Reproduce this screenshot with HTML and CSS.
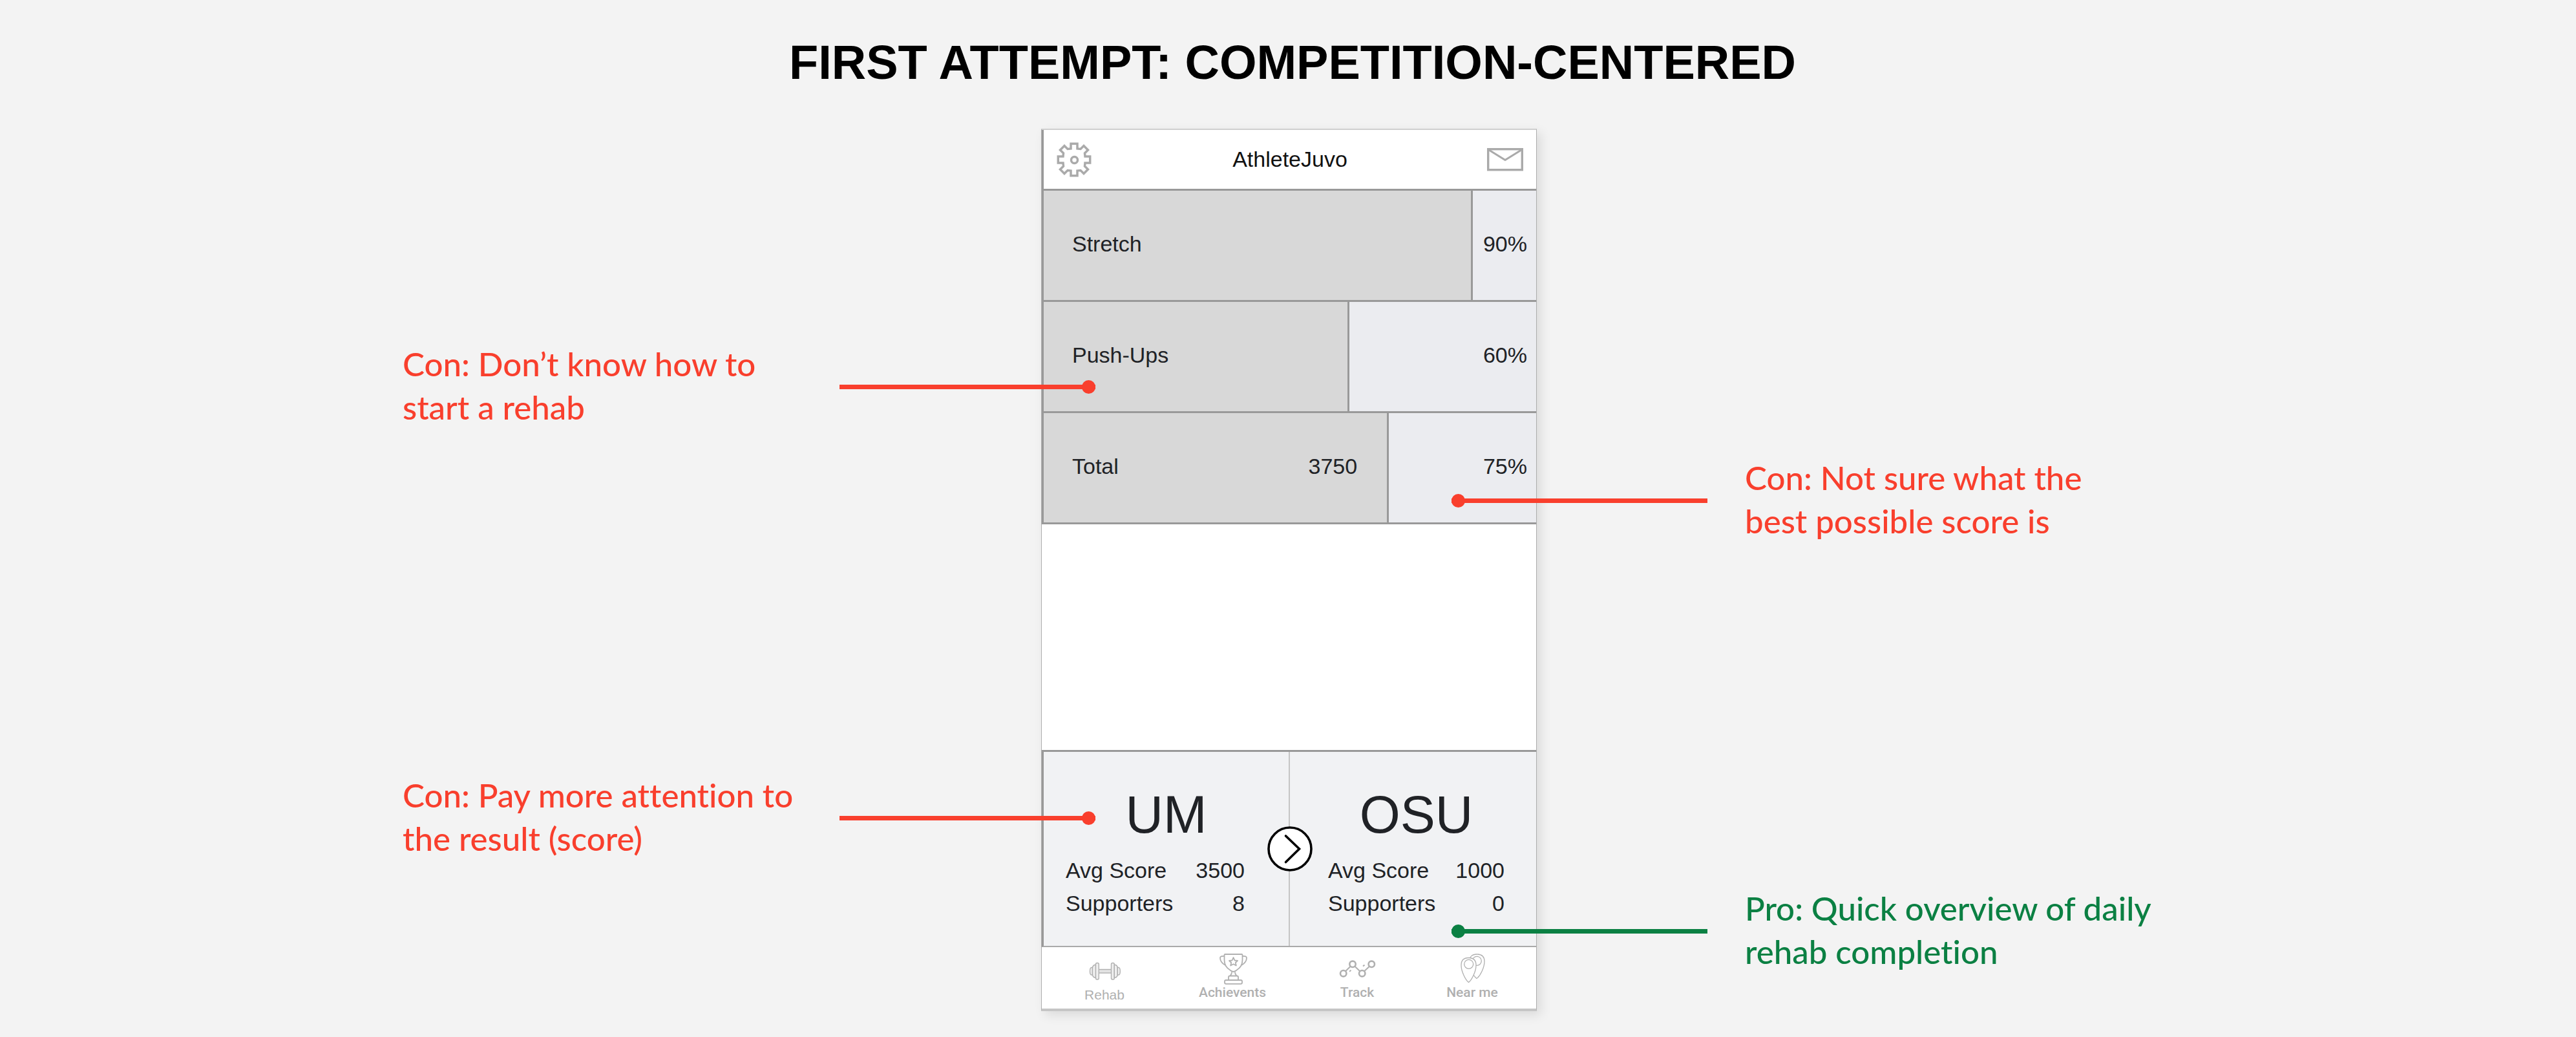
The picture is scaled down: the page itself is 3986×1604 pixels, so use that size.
FILE: index.html
```html
<!DOCTYPE html>
<html lang="en">
<head>
<meta charset="utf-8">
<meta name="viewport" content="width=device-width, initial-scale=1">
<title>First attempt: competition-centered</title>
<link rel="stylesheet" href="styles.css">
</head>
<body>
<main class="slide">
  <h1 class="slide-title">FIRST ATTEMPT: COMPETITION-CENTERED</h1>

  <div class="stage">
    <div class="notes notes-left">
      <div class="note con">
        <p class="note-text">Con: Don’t know how to<br>start a rehab</p>
        <span class="leader"></span>
      </div>
      <div class="note con">
        <p class="note-text">Con: Pay more attention to<br>the result (score)</p>
        <span class="leader"></span>
      </div>
    </div>

    <section class="phone" aria-label="AthleteJuvo app">
      <header class="app-bar">
        <button class="icon-button" type="button" aria-label="Settings">
          <svg width="54" height="54" viewBox="-27 -27 54 54" fill="none" stroke="currentColor" stroke-width="3.5">
            <path d="M-5 -24.7H5V-17L10 -16.5 15 -21.5 21.5 -15 16.5 -10 17 -5H24.7V5H17L16.5 10 21.5 15 15 21.5 10 16.5 5 17V24.7H-5V17L-10 16.5 -15 21.5 -21.5 15 -16.5 10 -17 5H-24.7V-5H-17L-16.5 -10 -21.5 -15 -15 -21.5 -10 -16.5 -5 -17Z"/>
            <circle cx=".5" cy=".5" r="5"/>
          </svg>
        </button>
        <h2 class="app-name">AthleteJuvo</h2>
        <button class="icon-button icon-end" type="button" aria-label="Messages">
          <svg width="56" height="36" viewBox="0 0 56 36" fill="none" stroke="currentColor" stroke-width="3.4">
            <rect x="1.7" y="1.7" width="52.6" height="32"/>
            <path d="M3 3L28 18.5 53 3" stroke-width="3"/>
          </svg>
        </button>
      </header>

      <ul class="tasks">
        <li class="task">
          <div class="task-fill" style="width:87.1%"><span>Stretch</span></div>
          <span class="task-percent">90%</span>
        </li>
        <li class="task">
          <div class="task-fill" style="width:62.1%"><span>Push-Ups</span></div>
          <span class="task-percent">60%</span>
        </li>
        <li class="task">
          <div class="task-fill" style="width:70.1%"><span>Total</span><span>3750</span></div>
          <span class="task-percent">75%</span>
        </li>
      </ul>

      <div class="versus">
        <div class="team team-home">
          <h3 class="team-name">UM</h3>
          <dl class="stats">
            <div class="stat"><dt>Avg Score</dt><dd>3500</dd></div>
            <div class="stat"><dt>Supporters</dt><dd>8</dd></div>
          </dl>
        </div>
        <div class="team team-away">
          <h3 class="team-name">OSU</h3>
          <dl class="stats">
            <div class="stat"><dt>Avg Score</dt><dd>1000</dd></div>
            <div class="stat"><dt>Supporters</dt><dd>0</dd></div>
          </dl>
        </div>
        <button class="next" type="button" aria-label="Next match-up">
          <svg width="70" height="70" viewBox="0 0 70 70" fill="none" stroke="#000" stroke-width="3.6">
            <circle cx="35" cy="35" r="33" fill="#fff"/>
            <path d="M28.500 15L49.500 35 28.500 55.500" stroke-linecap="round"/>
          </svg>
        </button>
      </div>

      <nav class="tabs" aria-label="Sections">
        <a class="tab tab-rehab" href="#rehab">
          <svg width="60" height="48" viewBox="0 0 60 48" fill="#f0f0f0" stroke="currentColor" stroke-width="1.4">
            <rect x="21" y="24.5" width="20" height="5.500" fill="#e3e3e3"/>
            <path d="M11.500 21.500H10Q7.500 21.500 7.500 27.300 7.500 33 10 33H11.500Z"/>
            <path d="M16.500 17.500H14.500Q11.500 19 11.500 22V32.500Q11.500 35.500 14.500 37H16.500Z"/>
            <rect x="16.500" y="14.500" width="4.800" height="25.500" rx="2"/>
            <rect x="40.500" y="14.500" width="4.800" height="25.500" rx="2"/>
            <path d="M45.300 17.500H47.300Q50.300 19 50.300 22V32.500Q50.300 35.500 47.300 37H45.300Z"/>
            <path d="M50.300 21.500H51.800Q54.300 21.500 54.300 27.300 54.300 33 51.800 33H50.300Z"/>
          </svg>
          <span>Rehab</span>
        </a>
        <a class="tab" href="#achievements">
          <svg width="60" height="48" viewBox="0 0 60 48" fill="none" stroke="currentColor" stroke-width="1.8" stroke-linejoin="round">
            <path d="M18.500 1H44.500Q45.500 1 45.500 3V10C45.500 19 41 23 36 26Q33.500 28 31.500 28 29.500 28 27 26C22 23 17.500 19 17.500 10V3Q17.500 1 18.500 1Z"/>
            <path d="M17.500 4Q11 3.500 11 6.500C11 12 14.500 15.500 19 18M45.500 4Q52 3.500 52 6.500C52 12 48.500 15.500 44 18"/>
            <path d="M31.500 6L33.500 10.500 38 11 34.800 14 35.800 18.500 31.500 16.200 27.200 18.500 28.200 14 25 11 29.500 10.500Z"/>
            <path d="M29 28.500Q29 32 26.500 34.500H36.500Q34 32 34 28.500M24 41V36.500Q24 34.500 26 34.500H37Q39 34.500 39 36.500V41"/>
            <rect x="18" y="41" width="27" height="5.800" rx="2"/>
          </svg>
          <span>Achievents</span>
        </a>
        <a class="tab" href="#track">
          <svg width="60" height="48" viewBox="0 0 60 48" fill="none" stroke="currentColor" stroke-width="2.6">
            <circle cx="8.700" cy="30.700" r="4.700"/>
            <circle cx="23" cy="16.300" r="4.700"/>
            <circle cx="37.700" cy="30.700" r="4.700"/>
            <circle cx="52.300" cy="16.300" r="4.700"/>
            <path d="M12 27.300L19.700 19.700M26.400 19.700L34.300 27.300M41 27.300L49 19.700M18 27.700L20.500 25.800M39 19.500L41.500 17.600" stroke-width="2"/>
          </svg>
          <span>Track</span>
        </a>
        <a class="tab" href="#near-me">
          <svg width="60" height="48" viewBox="0 0 60 48" fill="#fff" stroke="currentColor" stroke-width="1.300">
            <path d="M37 1C45 1 49 5 49 12 49 21 43 34 37 38.500 31 34 25.500 21 25.500 12 25.500 5 30 1 37 1Z"/>
            <circle cx="37.300" cy="11.300" r="7"/>
            <path d="M24.500 6.500C32 6.500 36 10 36 18 36 28 29 41 24.500 44.500 20 41 13 28 13 18 13 10 17 6.500 24.500 6.500Z"/>
            <circle cx="24.700" cy="16.300" r="7"/>
          </svg>
          <span>Near me</span>
        </a>
      </nav>
    </section>

    <div class="notes notes-right">
      <div class="note con">
        <span class="leader"></span>
        <p class="note-text">Con: Not sure what the<br>best possible score is</p>
      </div>
      <div class="note pro">
        <span class="leader"></span>
        <p class="note-text">Pro: Quick overview of daily<br>rehab completion</p>
      </div>
    </div>
  </div>
</main>
</body>
</html>
```
FILE: styles.css
```css
* {
  box-sizing: border-box;
}

body,
h1,
h2,
h3,
p,
ul,
dl,
dd {
  margin: 0;
  padding: 0;
}

body {
  background: #f3f3f3;
  font-family: "Liberation Sans", Arial, Helvetica, sans-serif;
}

button {
  padding: 0;
  border: 0;
  background: none;
  color: inherit;
  cursor: pointer;
}

svg {
  display: block;
}

.slide {
  padding: 53px 0 40px;
}

.slide-title {
  padding-left: 14px;
  font-size: 74px;
  font-weight: 700;
  line-height: 88px;
  text-align: center;
  color: #000;
}

/* phone in the middle, annotations on both sides */
.stage {
  display: grid;
  grid-template-columns: 1fr 767px 1fr;
  margin-top: 58px;
  padding-left: 3px;
}

.notes {
  display: flex;
  flex-direction: column;
  z-index: 1;
}

.notes-left {
  align-items: flex-end;
  gap: 533px;
  padding-top: 330px;
}

.notes-right {
  align-items: flex-start;
  gap: 532px;
  padding-top: 506px;
}

.note {
  display: flex;
}

.note-text {
  width: 676px;
  font-family: Lato, "Liberation Sans", sans-serif;
  font-size: 51px;
  font-weight: 500;
  font-variant-ligatures: none;
  line-height: 67px;
  white-space: nowrap;
}

.con {
  color: #f93f2d;
}

.pro {
  color: #0b8043;
}

/* connector line ending in a dot on the phone */
.leader {
  position: relative;
  height: 7px;
  margin-top: 66px;
  background: currentColor;
}

.leader::after {
  content: "";
  position: absolute;
  top: -7px;
  width: 21px;
  height: 21px;
  border-radius: 50%;
  background: currentColor;
}

.notes-left .leader {
  width: 396px;
  margin-right: -84px;
}

.notes-left .leader::after {
  right: 0;
}

.notes-right .leader {
  width: 396px;
  margin-right: 58px;
  margin-left: -132px;
}

.notes-right .leader::after {
  left: 0;
}

.phone {
  border: 1px solid #adadad;
  border-top: 2px solid #cfcfcf;
  border-bottom: 4px solid #c5c5c5;
  background: #fff;
  box-shadow: 6px 6px 16px rgba(0, 0, 0, 0.1);
  color: #202226;
  font-size: 34px;
}

.app-bar {
  display: grid;
  grid-template-columns: 1fr auto 1fr;
  align-items: center;
  height: 94px;
  padding: 0 20px;
  border-bottom: 3px solid #999;
  border-left: 3px solid #999;
}

.icon-button {
  justify-self: start;
  color: #aaa;
}

.icon-end {
  justify-self: end;
}

.app-name {
  font-size: 34px;
  font-weight: 400;
  color: #111;
}

.tasks {
  margin-bottom: 349px;
  list-style: none;
}

.task {
  display: flex;
  height: 172px;
  border-bottom: 3px solid #999;
  border-left: 3px solid #999;
  background: #ebecf0;
}

.task-fill,
.task-percent {
  display: flex;
  align-items: center;
  padding-bottom: 5px;
}

.task-fill {
  justify-content: space-between;
  padding-right: 46px;
  padding-left: 44px;
  border-right: 3px solid #999;
  background: #d8d8d8;
}

.task-percent {
  margin-left: auto;
  padding-right: 14px;
}

.versus {
  position: relative;
  display: grid;
  grid-template-columns: 1fr 1fr;
  border-top: 3px solid #999;
  border-bottom: 2px solid #aaa;
  border-left: 3px solid #999;
  background: #f1f2f4;
}

.team {
  padding: 56px 0 40px;
}

.team-home {
  padding-right: 68px;
  padding-left: 34px;
  border-right: 2px solid #c5c5c5;
}

.team-away {
  padding-right: 49px;
  padding-left: 59px;
}

.team-name {
  font-size: 81px;
  font-weight: 400;
  line-height: 82px;
  text-align: center;
}

.team-home .team-name {
  padding-left: 34px;
}

.stats {
  margin-top: 20px;
  line-height: 51px;
}

.stat {
  display: flex;
  justify-content: space-between;
}

.next {
  position: absolute;
  top: 50%;
  left: 50%;
  width: 70px;
  height: 70px;
  margin: -35px;
}

.tabs {
  display: grid;
  grid-template-columns: 194fr 202fr 184fr 172fr;
  height: 95px;
  padding: 10px 13px 0 0;
}

.tab {
  display: flex;
  flex-direction: column;
  align-items: center;
  color: #b0b0b0;
  font-family: Roboto, sans-serif;
  font-size: 21px;
  font-weight: 500;
  line-height: 24px;
  text-decoration: none;
}

.tab-rehab {
  gap: 4px;
  font-family: "Liberation Sans", Arial, sans-serif;
  font-weight: 400;
}
```
